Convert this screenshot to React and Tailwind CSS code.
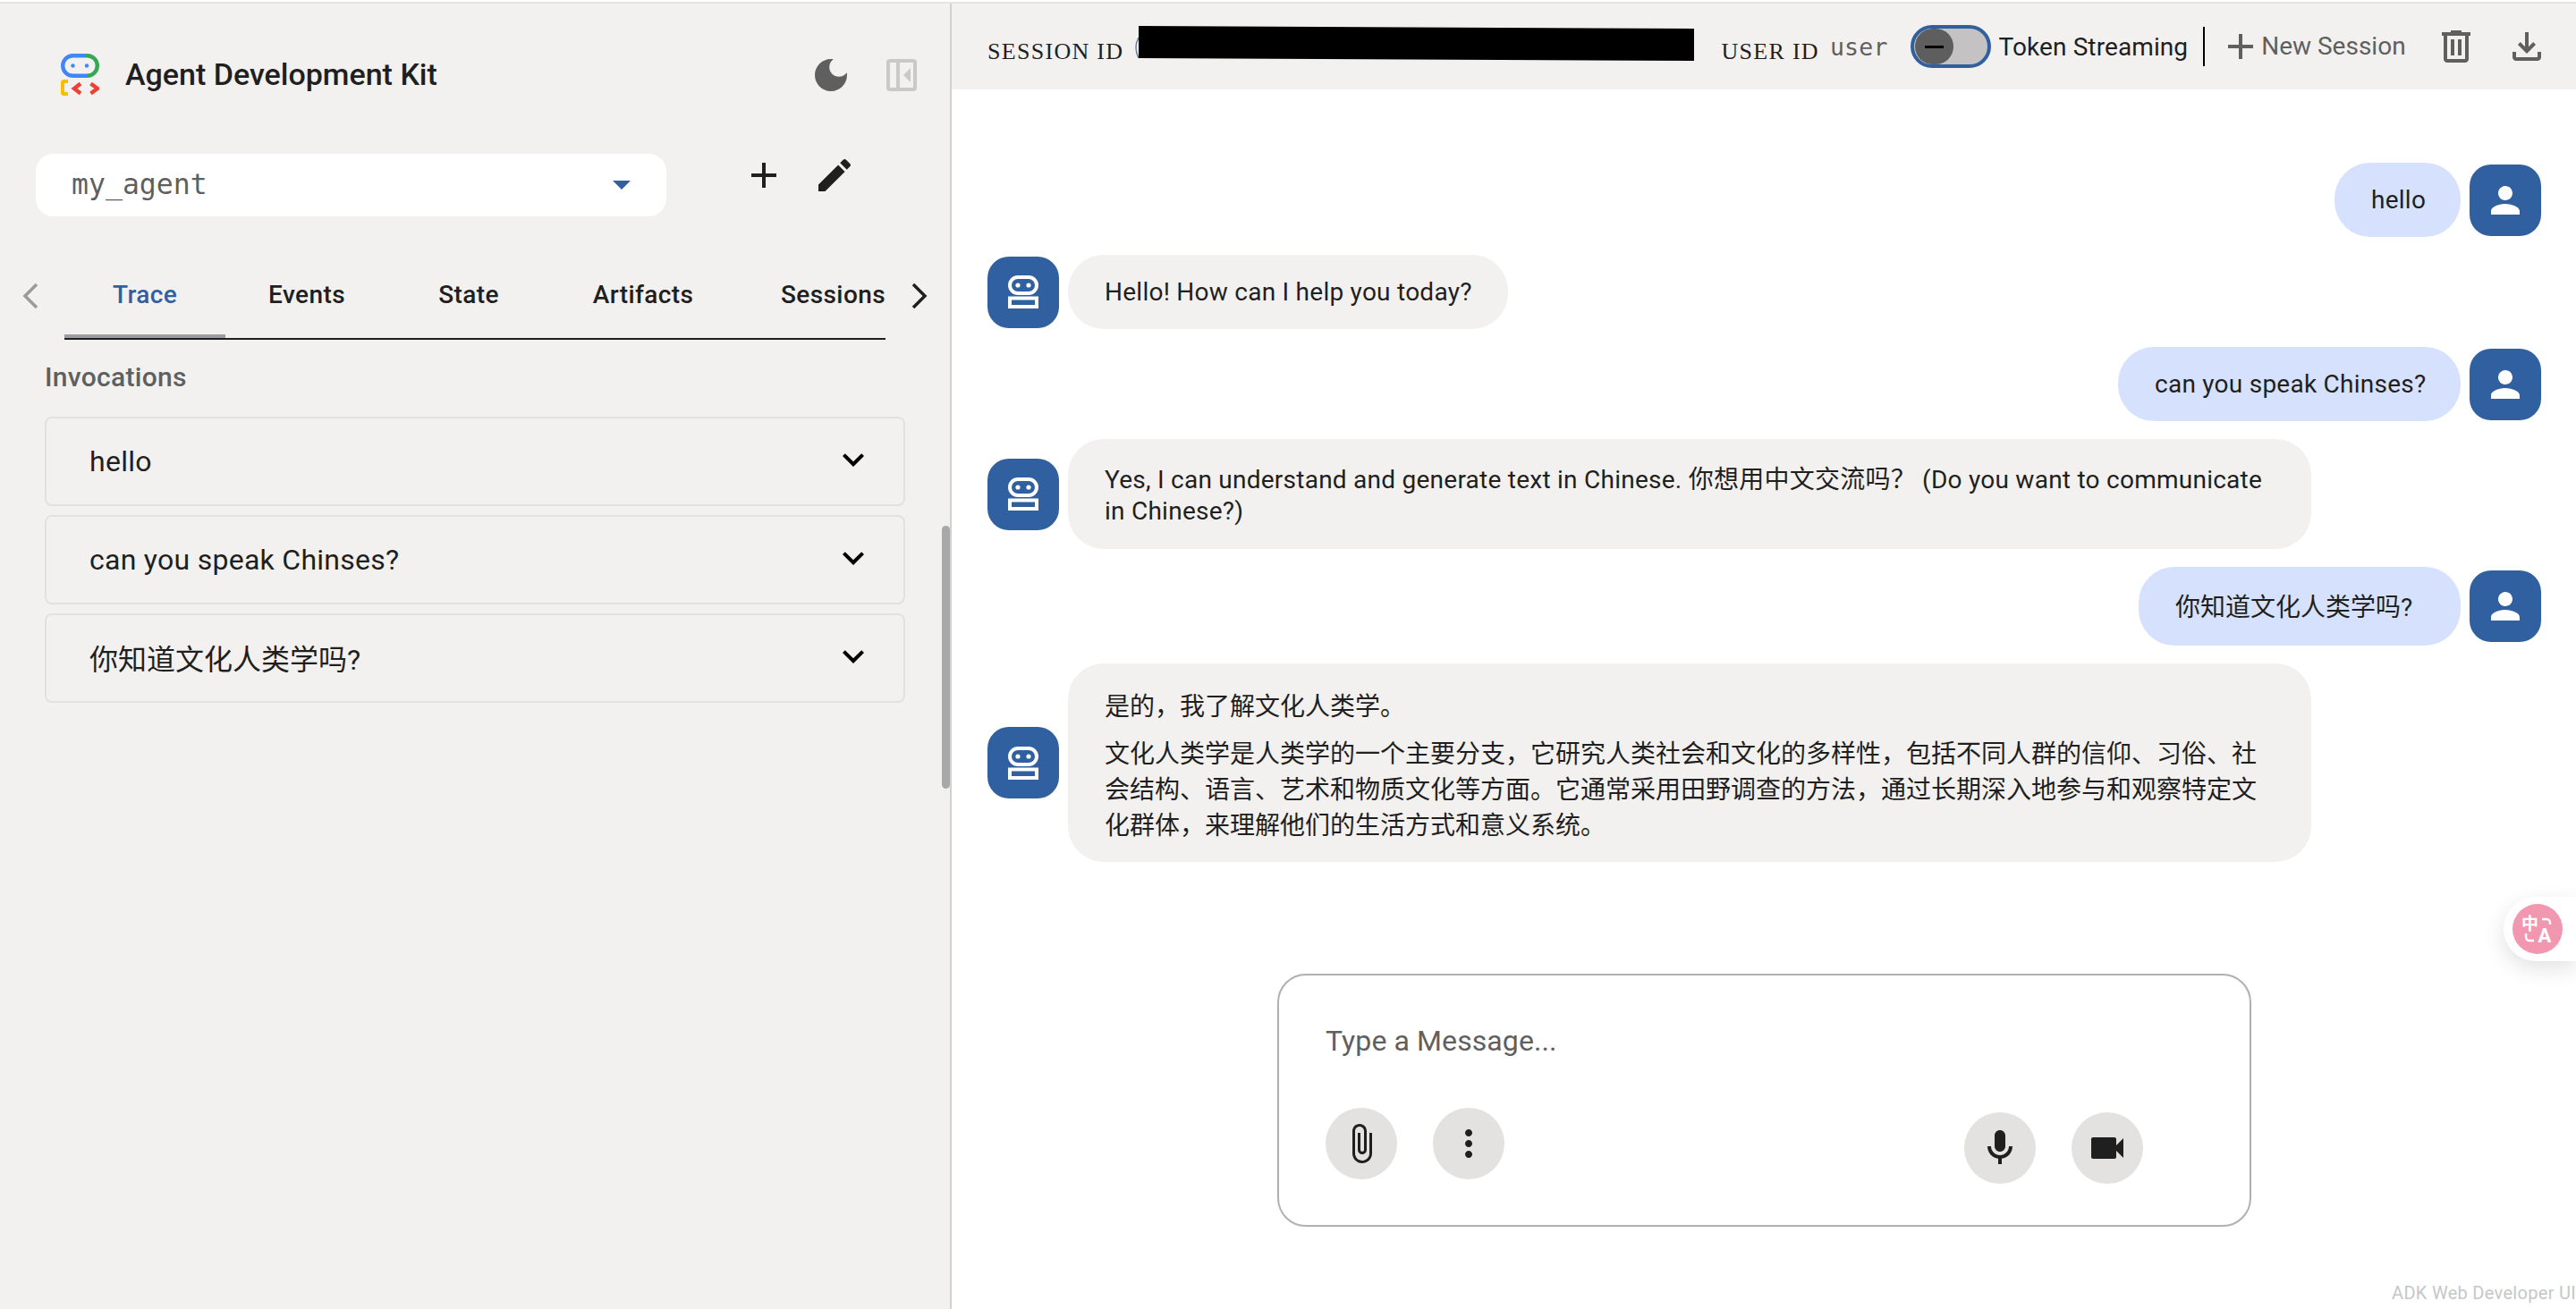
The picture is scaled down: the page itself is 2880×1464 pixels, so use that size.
const sans = "font-['Roboto','Noto_Sans_CJK_SC',sans-serif]"

function Icon({ d, size = 48, vb = '0 0 24 24', className = '' }) {
  return (
    <svg width={size} height={size} viewBox={vb} fill="currentColor" className={'shrink-0 ' + className}>
      <path d={d} />
    </svg>
  )
}

const paths = {
  plus: 'M19 13h-6v6h-2v-6H5v-2h6V5h2v6h6v2z',
  edit: 'M3 17.25V21h3.75L17.81 9.94l-3.75-3.75L3 17.25zM20.71 7.04c.39-.39.39-1.02 0-1.41l-2.34-2.34c-.39-.39-1.02-.39-1.41 0l-1.83 1.83 3.75 3.75 1.83-1.83z',
  moon: 'M12 3c-4.97 0-9 4.03-9 9s4.03 9 9 9 9-4.03 9-9c0-.46-.04-.92-.1-1.36-.98 1.37-2.58 2.26-4.4 2.26-2.98 0-5.4-2.42-5.4-5.4 0-1.81.89-3.42 2.26-4.4-.44-.06-.9-.1-1.36-.1z',
  expand: 'M16.59 8.59L12 13.17 7.41 8.59 6 10l6 6 6-6z',
  person: 'M12 12c2.21 0 4-1.79 4-4s-1.79-4-4-4-4 1.79-4 4 1.79 4 4 4zm0 2c-2.67 0-8 1.34-8 4v2h16v-2c0-2.66-5.33-4-8-4z',
  attach: 'M16.5 6v11.5c0 2.21-1.79 4-4 4s-4-1.79-4-4V5c0-1.38 1.12-2.5 2.5-2.5s2.5 1.12 2.5 2.5v10.5c0 .55-.45 1-1 1s-1-.45-1-1V6H10v9.5c0 1.38 1.12 2.5 2.5 2.5s2.5-1.12 2.5-2.5V5c0-2.21-1.79-4-4-4S7 2.79 7 5v12.5c0 3.04 2.46 5.5 5.5 5.5s5.5-2.46 5.5-5.5V6h-1.5z',
  more: 'M12 8c1.1 0 2-.9 2-2s-.9-2-2-2-2 .9-2 2 .9 2 2 2zm0 2c-1.1 0-2 .9-2 2s.9 2 2 2 2-.9 2-2-.9-2-2-2zm0 6c-1.1 0-2 .9-2 2s.9 2 2 2 2-.9 2-2-.9-2-2-2z',
  mic: 'M12 14c1.66 0 3-1.34 3-3V5c0-1.66-1.34-3-3-3S9 3.34 9 5v6c0 1.66 1.34 3 3 3zM17 11c0 2.76-2.24 5-5 5s-5-2.24-5-5H5c0 3.53 2.61 6.43 6 6.92V21h2v-3.08c3.39-.49 6-3.39 6-6.92h-2z',
  video: 'M17 10.5V7c0-.55-.45-1-1-1H4c-.55 0-1 .45-1 1v10c0 .55.45 1 1 1h12c.55 0 1-.45 1-1v-3.5l4 4v-11l-4 4z',
  trash: 'M280-120q-33 0-56.5-23.5T200-200v-520h-40v-80h200v-40h240v40h200v80h-40v520q0 33-23.5 56.5T680-120H280Zm400-600H280v520h400v-520ZM360-280h80v-360h-80v360Zm160 0h80v-360h-80v360ZM280-720v520-520Z',
  download: 'M480-320 280-520l56-58 104 104v-326h80v326l104-104 56 58-200 200ZM240-160q-33 0-56.5-23.5T160-240v-120h80v120h480v-120h80v120q0 33-23.5 56.5T720-160H240Z',
}

function Logo() {
  return (
    <svg width="43" height="47" viewBox="0 0 43 47" fill="none" className="shrink-0">
      <path d="M28 2.2H13.5a11.3 11.3 0 0 0 0 22.6H30" stroke="#4285f4" strokeWidth="4.4" />
      <path d="M28 2.2h1.5a11.3 11.3 0 0 1 0 22.6" stroke="#34a853" strokeWidth="4.4" />
      <circle cx="13.5" cy="13.5" r="2.2" fill="#4285f4" />
      <circle cx="29" cy="13.5" r="2.2" fill="#4285f4" />
      <path d="M8 31H3.5a1.5 1.5 0 0 0-1.5 1.5v11A1.5 1.5 0 0 0 3.5 45H8" stroke="#fbbc04" strokeWidth="4" />
      <path d="M22 33.5L15 39l7 5.5M33.5 33.5L41 39l-7.5 5.5" stroke="#ea4335" strokeWidth="4.4" />
    </svg>
  )
}

function PanelIcon() {
  return (
    <svg width="34" height="36" viewBox="0 0 34 36" className="shrink-0">
      <rect x="2" y="2" width="30" height="32" rx="2" fill="none" stroke="#c9c9c9" strokeWidth="4" />
      <rect x="11" y="2" width="4" height="32" fill="#c9c9c9" />
      <path d="M27 10v16l-8-8z" fill="#c9c9c9" />
    </svg>
  )
}

function BotIcon() {
  return (
    <svg width="34" height="37" viewBox="0 0 34 37" className="shrink-0">
      <rect x="2" y="2" width="30" height="18" rx="9" fill="none" stroke="#fff" strokeWidth="4" />
      <circle cx="11" cy="11" r="2.6" fill="#fff" />
      <circle cx="23" cy="11" r="2.6" fill="#fff" />
      <rect x="2" y="25.5" width="30" height="9.5" fill="none" stroke="#fff" strokeWidth="4" />
    </svg>
  )
}

function Chevron({ dir, className }) {
  return (
    <svg width="19" height="28" viewBox="0 0 19 28" fill="none" stroke="currentColor" strokeWidth="3.5" className={'shrink-0 ' + className}>
      <path d={dir === 'left' ? 'M16 1L3 14l13 13' : 'M3 1l13 13L3 27'} />
    </svg>
  )
}

function Avatar({ bot }) {
  return (
    <div className="w-[80px] h-[80px] shrink-0 rounded-[24px] bg-[#30609f] flex items-center justify-center text-white">
      {bot ? <BotIcon /> : <Icon d={paths.person} />}
    </div>
  )
}

function UserRow({ text, w, h, cjk }) {
  return (
    <div className="flex justify-end items-center gap-[10px]" style={{ height: h }}>
      <div className={'bg-[#d6e2fd] rounded-[40px] flex items-center pl-[41px] h-full ' + (cjk ? 'tracking-normal pt-[3px]' : '')} style={{ width: w }}>{text}</div>
      <Avatar />
    </div>
  )
}

function BotRow({ h, w, className = 'pt-[3px]', children }) {
  return (
    <div className="flex items-center gap-[10px]" style={{ height: h }}>
      <Avatar bot />
      <div className={'bg-[#f3f1f0] rounded-[40px] px-[41px] flex flex-col justify-center h-full ' + className} style={{ width: w }}>{children}</div>
    </div>
  )
}

function RoundBtn({ d }) {
  return (
    <div className="w-[80px] h-[80px] rounded-full bg-[#e4e2e1] flex items-center justify-center text-[#1f1f1f]">
      <Icon d={d} />
    </div>
  )
}

function Sidebar() {
  const tabs = [
    ['Trace', 'w-[180px] justify-center text-[#30609f]'],
    ['Events', 'w-[182px] justify-center'],
    ['State', 'w-[180px] justify-center'],
    ['Artifacts', 'w-[210px] justify-center'],
    ['Sessions', 'w-[166px] justify-start pl-[49px]'],
  ]
  const invocations = [
    ['hello', 'tracking-[0.27px]'],
    ['can you speak Chinses?', 'tracking-[0.27px]'],
    ['你知道文化人类学吗?', 'mt-[4px]'],
  ]
  return (
    <aside className="relative w-[1064px] shrink-0 bg-[#f3f1f0] border-r-2 border-[#d0d0d0] text-[#1f1f1f]">
      <div className="flex items-center pl-[68px] pt-[56px] h-[103px]">
        <Logo />
        <span className="ml-[29px] text-[34px] font-medium">Agent Development Kit</span>
        <Icon d={paths.moon} className="ml-auto text-[#5f5f5f]" />
        <div className="ml-[38px] mr-[37px]"><PanelIcon /></div>
      </div>
      <div className="flex mt-[65px] pl-[40px]">
        <div className="w-[705px] h-[70px] bg-white rounded-[20px] flex items-center px-[40px] justify-between">
          <span className="font-['DejaVu_Sans_Mono',monospace] text-[31.5px] text-[#5f5f5f]">my_agent</span>
          <svg width="20" height="10" viewBox="0 0 20 10"><path d="M0 0h20L10 10z" fill="#30609f" /></svg>
        </div>
        <Icon d={paths.plus} className="ml-[85px]" />
        <Icon d={paths.edit} className="ml-[31px]" />
      </div>
      <div className="flex items-start mt-[63px] pl-[25px]">
        <Chevron dir="left" className="text-[#9a9a9a] mt-[12px]" />
        <div className="ml-[28px] w-[918px] h-[75px] border-b-2 border-[#1f1f1f] flex relative">
          <div className="absolute left-0 bottom-0 w-[180px] h-[4px] bg-[#9a9ea3]" />
          {tabs.map(([name, cls]) => (
            <div key={name} className={'text-[28px] tracking-[0.4px] font-medium h-[50px] flex items-center shrink-0 ' + cls}>{name}</div>
          ))}
        </div>
        <Chevron dir="right" className="ml-[28px] mt-[12px] text-[#1f1f1f]" />
      </div>
      <div className="mt-[25px] pl-[50px] text-[30px] tracking-[0.3px] font-medium text-[#5f5f5f] h-[34px] leading-[34px]">Invocations</div>
      <div className="mt-[27px] ml-[50px] w-[962px] flex flex-col gap-[10px]">
        {invocations.map(([t, cls]) => (
          <div key={t} className="h-[100px] border-2 border-[#e3e1e0] rounded-[8px] flex items-center pl-[48px] pr-[32px] justify-between text-[32px]">
            <span className={cls}>{t}</span>
            <Icon d={paths.expand} className="text-black -mt-[4px]" />
          </div>
        ))}
      </div>
      {/* scrollbar */}
      <div className="absolute right-0 top-[584px] w-[9px] h-[294px] rounded-full bg-[#a8a8a8]" />
    </aside>
  )
}

function Header() {
  return (
    <div className="h-[96px] bg-[#f3f1f0] flex items-start pl-[40px] text-[#1f1f1f] shrink-0">
      <span className="mt-[41px] font-['Liberation_Serif',serif] text-[26px] leading-[26px] tracking-[1.3px] whitespace-nowrap">SESSION ID</span>
      <svg width="626" height="40" viewBox="0 0 626 40" className="ml-[12px] mt-[25px] shrink-0">
        <path d="M5 13Q-1 24 5 36" fill="none" stroke="#6a7f99" strokeWidth="1.5" />
        <polygon points="5,0 626,3 626,39 5,36" fill="#000" />
      </svg>
      <span className="ml-[30px] mt-[41px] font-['Liberation_Serif',serif] text-[26px] leading-[26px] tracking-[1.3px] whitespace-nowrap">USER ID</span>
      <span className="ml-[12px] mt-[36px] font-['DejaVu_Sans_Mono',monospace] text-[26.5px] leading-[26px] tracking-[0.2px] text-[#5f5f5f]">user</span>
      <div className="ml-[25px] mt-[24px] w-[90px] h-[48px] rounded-[24px] border-4 border-[#30609f] bg-[#c4c2c2] flex items-center shrink-0">
        <div className="ml-[1px] w-[43px] h-[40px] rounded-full bg-[#5e5e5e] flex items-center justify-center">
          <div className="w-[21px] h-[3px] bg-black" />
        </div>
      </div>
      <span className="ml-[9px] mt-[32px] text-[28px] leading-[34px] tracking-[0.1px] whitespace-nowrap">Token Streaming</span>
      <div className="ml-[17px] mt-[26px] w-[2px] h-[44px] bg-black shrink-0" />
      <div className="ml-[16px] mt-[24px] flex items-center text-[#5f5f5f]">
        <Icon d={paths.plus} />
        <span className="-ml-[1px] text-[28px] whitespace-nowrap">New Session</span>
      </div>
      <Icon d={paths.trash} vb="0 -960 960 960" className="ml-[32px] mt-[24px] text-[#5f5f5f]" />
      <Icon d={paths.download} vb="0 -960 960 960" className="ml-[31px] mt-[24px] text-[#5f5f5f]" />
    </div>
  )
}

function Chat() {
  return (
    <div className="flex flex-col gap-[20px] pt-[82px] pl-[40px] pr-[39px] text-[28px] tracking-[0.25px] text-[#1f1f1f] leading-[35px]">
      <UserRow text="hello" w={141} h={83} />
      <BotRow h={83} w={492} className="whitespace-nowrap">Hello! How can I help you today?</BotRow>
      <UserRow text="can you speak Chinses?" w={383} h={83} />
      <BotRow h={123} w={1390}>Yes, I can understand and generate text in Chinese. 你想用中文交流吗？ (Do you want to communicate in Chinese?)</BotRow>
      <UserRow text="你知道文化人类学吗?" w={360} h={88} cjk />
      <BotRow h={222} w={1390} className="pt-[9px]">
        <p className="leading-[40px] tracking-normal">是的，我了解文化人类学。</p>
        <p className="mt-[13px] leading-[40px] tracking-normal">文化人类学是人类学的一个主要分支，它研究人类社会和文化的多样性，包括不同人群的信仰、习俗、社会结构、语言、艺术和物质文化等方面。它通常采用田野调查的方法，通过长期深入地参与和观察特定文化群体，来理解他们的生活方式和意义系统。</p>
      </BotRow>
    </div>
  )
}

function InputBox() {
  return (
    <div className="mt-[125px] ml-[364px] w-[1089px] h-[283px] border-2 border-[#b0b0b0] rounded-[32px] pl-[52px] pr-[119px] pt-[56px]">
      <div className="text-[32px] leading-[34px] tracking-[0.1px] text-[#5f5f5f]">Type a Message...</div>
      <div className="flex justify-between mt-[58px]">
        <div className="flex gap-[40px]">
          <RoundBtn d={paths.attach} />
          <RoundBtn d={paths.more} />
        </div>
        <div className="flex gap-[40px] mt-[5px]">
          <RoundBtn d={paths.mic} />
          <RoundBtn d={paths.video} />
        </div>
      </div>
    </div>
  )
}

function TranslateWidget() {
  return (
    <div className="absolute right-0 top-[1003px] w-[81px] h-[72px] bg-white rounded-l-[36px] shadow-[0_8px_24px_rgba(0,0,0,0.12)] flex items-center pl-[10px]">
      <svg width="56" height="56" viewBox="0 0 56 56">
        <circle cx="28" cy="28" r="28" fill="#f297b0" />
        <text x="10" y="29" fontSize="19" fontWeight="700" fill="#fff" fontFamily="'Noto Sans CJK SC',sans-serif">中</text>
        <text x="28.5" y="43" fontSize="22" fontWeight="700" fill="#fff" fontFamily="Roboto,sans-serif">A</text>
        <path d="M33 17h5a4 4 0 0 1 4 4v2M15 33v4a4 4 0 0 0 4 4h5" fill="none" stroke="#fff" strokeWidth="2.5" />
      </svg>
    </div>
  )
}

export default function App() {
  return (
    <div className={'relative w-[2880px] h-[1464px] overflow-hidden bg-white pt-[2px] ' + sans}>
      <div className="h-[2px] bg-[#e4e4e4]" />
      <div className="flex h-[1460px]">
        <Sidebar />
        <main className="flex-1 flex flex-col min-w-0">
          <Header />
          <Chat />
          <InputBox />
        </main>
      </div>
      <TranslateWidget />
      <div className="absolute right-0 bottom-[6px] text-[20px] leading-[24px] tracking-[0.3px] text-[#c4c8c8] whitespace-nowrap">ADK Web Developer UI</div>
    </div>
  )
}
